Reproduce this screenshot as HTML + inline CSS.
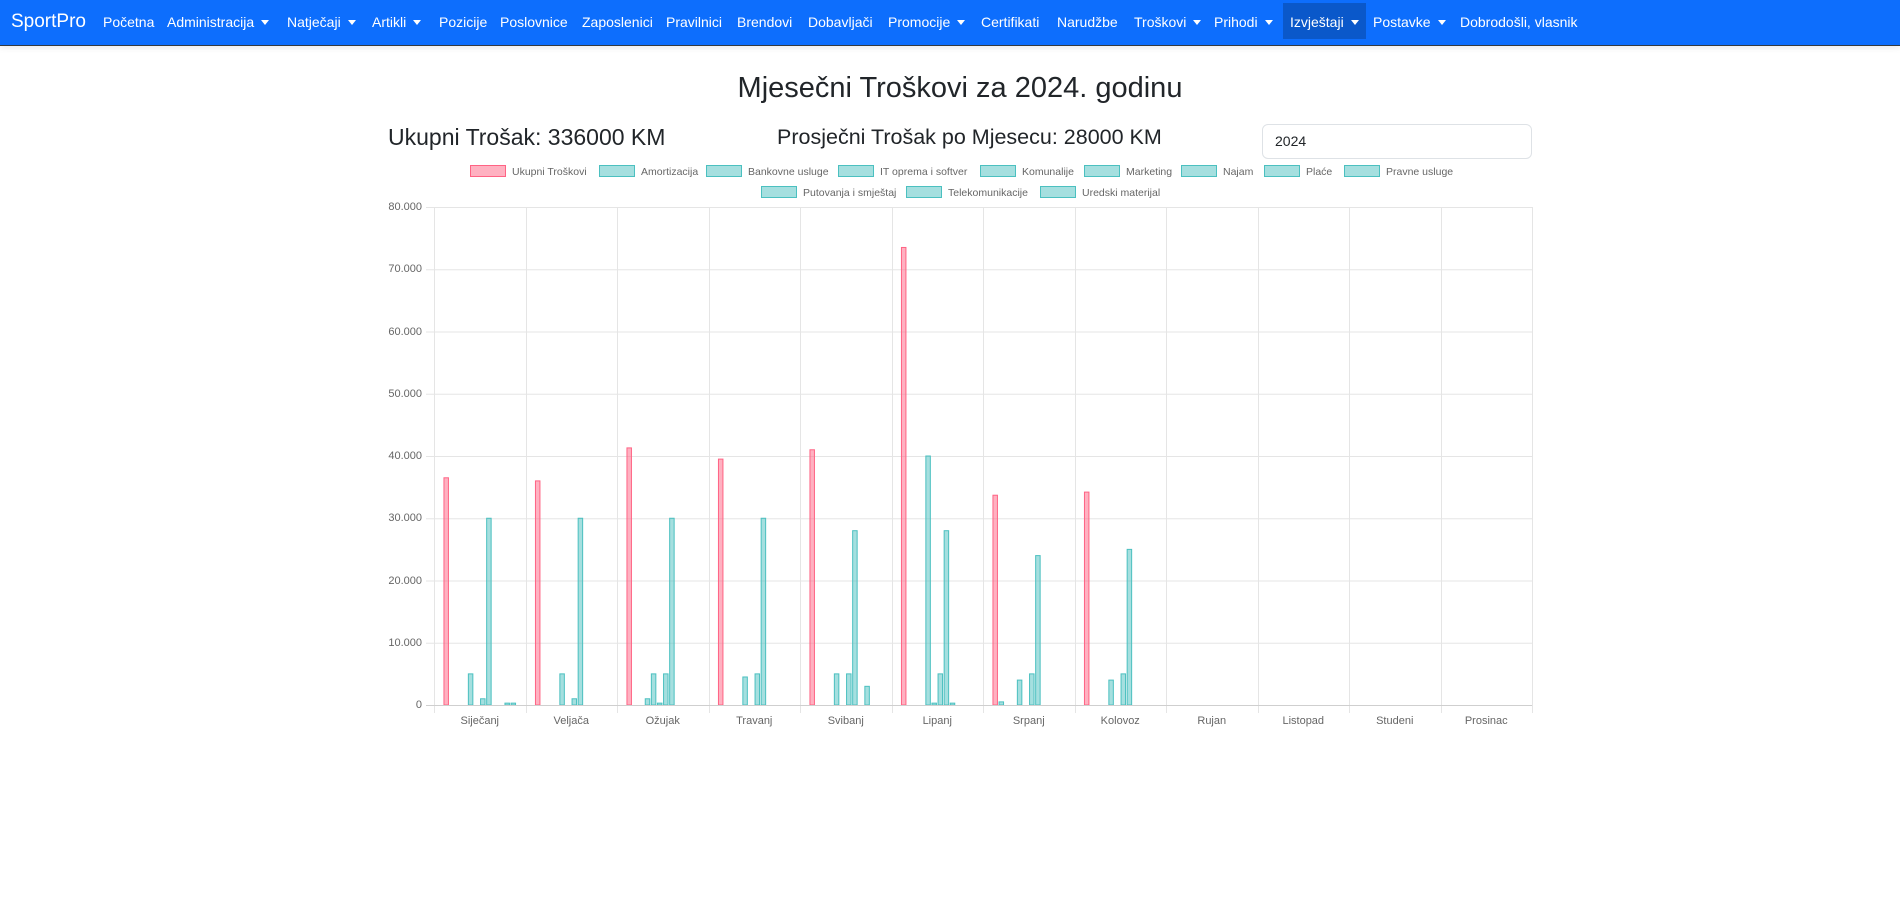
<!DOCTYPE html>
<html><head><meta charset="utf-8">
<style>
*{margin:0;padding:0;box-sizing:border-box}
body{width:1900px;height:906px;background:#fff;font-family:"Liberation Sans",sans-serif;position:relative;overflow:hidden;color:#212529}
.nav{position:absolute;left:0;top:0;width:1900px;height:46px;background:#0d6efd;border-bottom:1px solid #343a40;box-shadow:0 2px 6px rgba(0,0,0,.08)}
.nav span{position:absolute;top:13px;color:#fff;font-size:14px;white-space:nowrap;line-height:18px}
.brand{font-size:19px!important;top:10px!important;line-height:24px!important}
.c{display:inline-block;width:0;height:0;border-left:4px solid transparent;border-right:4px solid transparent;border-top:5px solid #fff;margin-left:7px;vertical-align:2px}
.act{position:absolute;left:1283px;top:3px;width:83px;height:36px;background:#0a58ca}
.t{position:absolute;white-space:nowrap}
.lg{position:absolute;font-size:10.5px;color:#666;white-space:nowrap;line-height:14px}
.lg i{display:inline-block;width:36px;height:12px;background:rgba(75,192,192,.5);border:1px solid rgb(75,192,192);vertical-align:-2px;margin-right:6px}
.lg i.p{background:rgba(255,99,132,.5);border-color:rgb(255,99,132)}
.yl{position:absolute;right:1478px;font-size:11px;color:#666;text-align:right;line-height:14px}
.xl{position:absolute;width:91.5px;text-align:center;font-size:11px;color:#666;top:715px}
</style></head><body>
<div class="nav">
<div class="act"></div>
<span class="brand" style="left:11px">SportPro</span>
<span style="left:103px">Početna</span>
<span style="left:167px">Administracija<i class="c"></i></span>
<span style="left:287px">Natječaji<i class="c"></i></span>
<span style="left:372px">Artikli<i class="c"></i></span>
<span style="left:439px">Pozicije</span>
<span style="left:500px">Poslovnice</span>
<span style="left:582px">Zaposlenici</span>
<span style="left:666px">Pravilnici</span>
<span style="left:737px">Brendovi</span>
<span style="left:808px">Dobavljači</span>
<span style="left:888px">Promocije<i class="c"></i></span>
<span style="left:981px">Certifikati</span>
<span style="left:1057px">Narudžbe</span>
<span style="left:1134px">Troškovi<i class="c"></i></span>
<span style="left:1214px">Prihodi<i class="c"></i></span>
<span style="left:1290px">Izvještaji<i class="c"></i></span>
<span style="left:1373px">Postavke<i class="c"></i></span>
<span style="left:1460px">Dobrodošli, vlasnik</span>
</div>

<div class="t" style="left:0;width:1920px;text-align:center;top:70px;font-size:29px;line-height:36px">Mjesečni Troškovi za 2024. godinu</div>
<div class="t" style="left:388px;top:123px;font-size:23px;line-height:28px">Ukupni Trošak: 336000 KM</div>
<div class="t" style="left:777px;top:123px;font-size:21.5px;line-height:28px">Prosječni Trošak po Mjesecu: 28000 KM</div>
<div class="t" style="left:1262px;top:124px;width:270px;height:35px;border:1px solid #dee2e6;border-radius:6px;font-size:14px;line-height:33px;padding-left:12px">2024</div>

<div class="lg" style="left:470px;top:165px"><i class="p"></i>Ukupni Troškovi</div>
<div class="lg" style="left:599px;top:165px"><i></i>Amortizacija</div>
<div class="lg" style="left:706px;top:165px"><i></i>Bankovne usluge</div>
<div class="lg" style="left:838px;top:165px"><i></i>IT oprema i softver</div>
<div class="lg" style="left:980px;top:165px"><i></i>Komunalije</div>
<div class="lg" style="left:1084px;top:165px"><i></i>Marketing</div>
<div class="lg" style="left:1181px;top:165px"><i></i>Najam</div>
<div class="lg" style="left:1264px;top:165px"><i></i>Plaće</div>
<div class="lg" style="left:1344px;top:165px"><i></i>Pravne usluge</div>
<div class="lg" style="left:761px;top:186px"><i></i>Putovanja i smještaj</div>
<div class="lg" style="left:906px;top:186px"><i></i>Telekomunikacije</div>
<div class="lg" style="left:1040px;top:186px"><i></i>Uredski materijal</div>

<div class="yl" style="top:200px">80.000</div>
<div class="yl" style="top:262px">70.000</div>
<div class="yl" style="top:325px">60.000</div>
<div class="yl" style="top:387px">50.000</div>
<div class="yl" style="top:449px">40.000</div>
<div class="yl" style="top:511px">30.000</div>
<div class="yl" style="top:574px">20.000</div>
<div class="yl" style="top:636px">10.000</div>
<div class="yl" style="top:698px">0</div>

<div class="xl" style="left:434px">Siječanj</div>
<div class="xl" style="left:525.5px">Veljača</div>
<div class="xl" style="left:617px">Ožujak</div>
<div class="xl" style="left:708.5px">Travanj</div>
<div class="xl" style="left:800px">Svibanj</div>
<div class="xl" style="left:891.5px">Lipanj</div>
<div class="xl" style="left:983px">Srpanj</div>
<div class="xl" style="left:1074.5px">Kolovoz</div>
<div class="xl" style="left:1166px">Rujan</div>
<div class="xl" style="left:1257.5px">Listopad</div>
<div class="xl" style="left:1349px">Studeni</div>
<div class="xl" style="left:1440.5px">Prosinac</div>

<svg id="ch" width="1900" height="906" style="position:absolute;left:0;top:0" xmlns="http://www.w3.org/2000/svg"></svg>
<script>
var s=document.getElementById('ch'),h='';
var L=434,R=1532,T=207,B=705,cw=(R-L)/12,u=(B-T)/8;
for(var i=0;i<=8;i++){var y=T+i*u;h+='<line x1="'+(L-8)+'" x2="'+R+'" y1="'+(y+.5)+'" y2="'+(y+.5)+'" stroke="#e5e5e5"/>';}
for(var i=0;i<=12;i++){var x=Math.round(L+i*cw)+.5;h+='<line x1="'+x+'" x2="'+x+'" y1="'+T+'" y2="'+(B+8)+'" stroke="#e5e5e5"/>';}
var d=[
[[0,36.5],[4,5],[6,1],[7,30],[10,.3],[11,.3]],
[[0,36],[4,5],[6,1],[7,30]],
[[0,41.3],[3,1],[4,5],[5,.3],[6,5],[7,30]],
[[0,39.5],[4,4.5],[6,5],[7,30]],
[[0,41],[4,5],[6,5],[7,28],[9,3]],
[[0,73.5],[4,40],[5,.3],[6,5],[7,28],[8,.3]],
[[0,33.7],[1,.5],[4,4],[6,5],[7,24]],
[[0,34.2],[4,4],[6,5],[7,25]]];
var slot=cw*0.8/12,bw=slot*0.9;
d.forEach(function(m,c){var x0=L+c*cw+cw*0.1;m.forEach(function(b){
var x=x0+b[0]*slot+(slot-bw)/2,hh=b[1]*u/10,y=B-hh;var p=b[0]==0;
h+='<rect x="'+(x+.5)+'" y="'+y+'" width="'+(bw-1)+'" height="'+hh+'" fill="'+(p?'rgba(255,99,132,0.5)':'rgba(75,192,192,0.5)')+'" stroke="'+(p?'rgb(255,99,132)':'rgb(75,192,192)')+'" stroke-width="1"/>';});});
h+='<line x1="'+(L-8)+'" x2="'+R+'" y1="'+(B+.5)+'" y2="'+(B+.5)+'" stroke="#cfcfcf"/>';
s.innerHTML=h;
</script>
</body></html>
